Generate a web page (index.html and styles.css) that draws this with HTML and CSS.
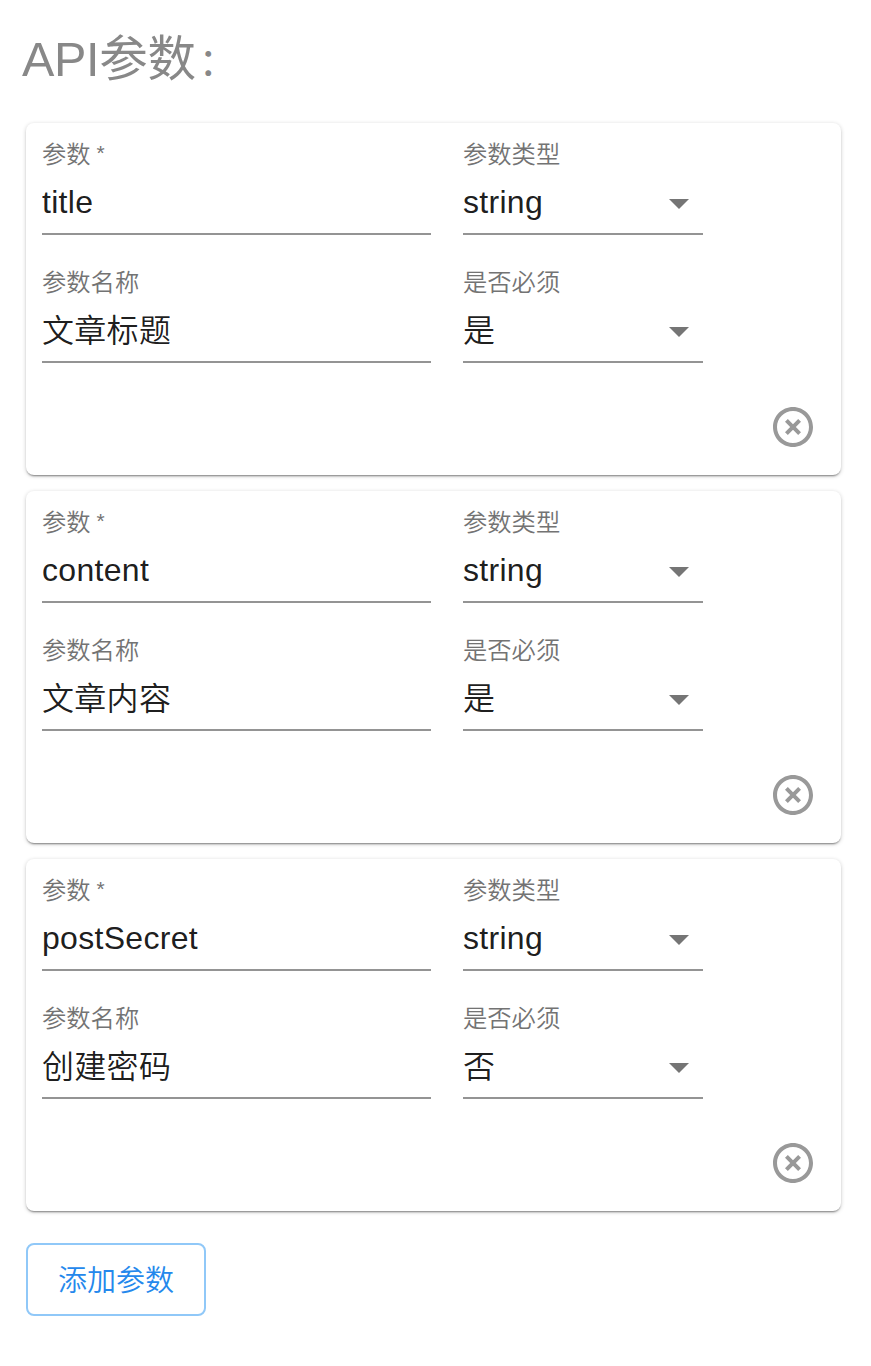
FILE: index.html
```
<!DOCTYPE html>
<html lang="zh-CN">
<head>
<meta charset="utf-8">
<title>API参数</title>
<link rel="stylesheet" href="styles.css">
</head>
<body>
<main class="page">
  <h1 class="heading">API参数<span class="colon">：</span></h1>
  <div class="cards" id="cards"></div>
  <button class="add" type="button">添加参数</button>
</main>
<script src="app.js"></script>
</body>
</html>
```

FILE: styles.css
```
* { box-sizing: border-box; }
body {
  margin: 0;
  background: #fff;
  color: rgba(0, 0, 0, .9);
  font-family: "Liberation Sans", "Noto Sans CJK SC", sans-serif;
}
.page { padding: 23px 30px 0 26px; }
.heading {
  margin: 0 0 28px -4px;
  height: 72px;
  line-height: 72px;
  font-size: 48.5px;
  font-weight: 400;
  letter-spacing: -.3px;
  color: #888;
}
.colon { font-size: 38px; margin-left: 3px; vertical-align: 1px; line-height: 1; }
.cards { display: flex; flex-direction: column; gap: 16px; }
.card {
  width: 815px;
  height: 352px;
  padding: 16px;
  border-radius: 8px;
  background: #fff;
  box-shadow: 0 2px 2px -1px rgba(0,0,0,.42), 0 1px 4px rgba(0,0,0,.2);
}
.fields {
  display: grid;
  grid-template-columns: 389px 240px;
  column-gap: 32px;
  row-gap: 32px;
}
.field { height: 96px; border-bottom: 2px solid #949494; }
.label {
  height: 30px;
  line-height: 32px;
  font-size: 24.3px;
  font-weight: 350;
  color: #737373;
  white-space: nowrap;
}
.star { display: inline-block; margin-left: 6px; font-size: 21px; line-height: 1; vertical-align: 3px; }
.value {
  display: flex;
  align-items: center;
  justify-content: space-between;
  height: 64px;
  padding-top: 2px;
  font-size: 32px;
  line-height: 40px;
  letter-spacing: .3px;
}
.value.han { font-weight: 350; }
.value.han span { padding-top: 2px; }
.arrow { width: 20px; height: 10px; margin: 4px 14px 0 0; fill: #757575; }
.actions { display: flex; justify-content: flex-end; padding: 40px 8px 0 0; }
.remove { padding: 0; border: 0; background: none; height: 48px; }
.remove svg { display: block; width: 48px; height: 48px; fill: #999; }
.add {
  display: block;
  width: 180px;
  height: 73px;
  margin-top: 32px;
  padding: 0 0 4px;
  border: 2px solid #90c8f8;
  border-radius: 8px;
  background: #fff;
  color: #2488ec;
  font: 350 29px "Liberation Sans", "Noto Sans CJK SC", sans-serif;
}
```

FILE: app.js
```
const params = [
  ["title", "文章标题", "是"],
  ["content", "文章内容", "是"],
  ["postSecret", "创建密码", "否"]
];
const arrow = '<svg class="arrow" viewBox="0 0 20 10"><path d="M0 0h20L10 10z"/></svg>';
const field = (label, value, icon = "", style = "") =>
  `<div class="field"><div class="label">${label}</div><div class="value ${style}"><span>${value}</span>${icon}</div></div>`;
document.getElementById("cards").innerHTML = params.map(([key, name, required]) => `
  <section class="card">
    <div class="fields">
      ${field('参数<span class="star">*</span>', key)}
      ${field("参数类型", "string", arrow)}
      ${field("参数名称", name, "", "han")}
      ${field("是否必须", required, arrow, "han")}
    </div>
    <div class="actions"><button class="remove" type="button" aria-label="删除"><svg viewBox="0 0 24 24"><path d="M14.59 8L12 10.59 9.41 8 8 9.41 10.59 12 8 14.59 9.41 16 12 13.41 14.59 16 16 14.59 13.41 12 16 9.41 14.59 8zM12 2C6.47 2 2 6.47 2 12s4.47 10 10 10 10-4.47 10-10S17.53 2 12 2zm0 18c-4.41 0-8-3.59-8-8s3.59-8 8-8 8 3.59 8 8-3.59 8-8 8z"/></svg></button></div>
  </section>`).join("");
```
